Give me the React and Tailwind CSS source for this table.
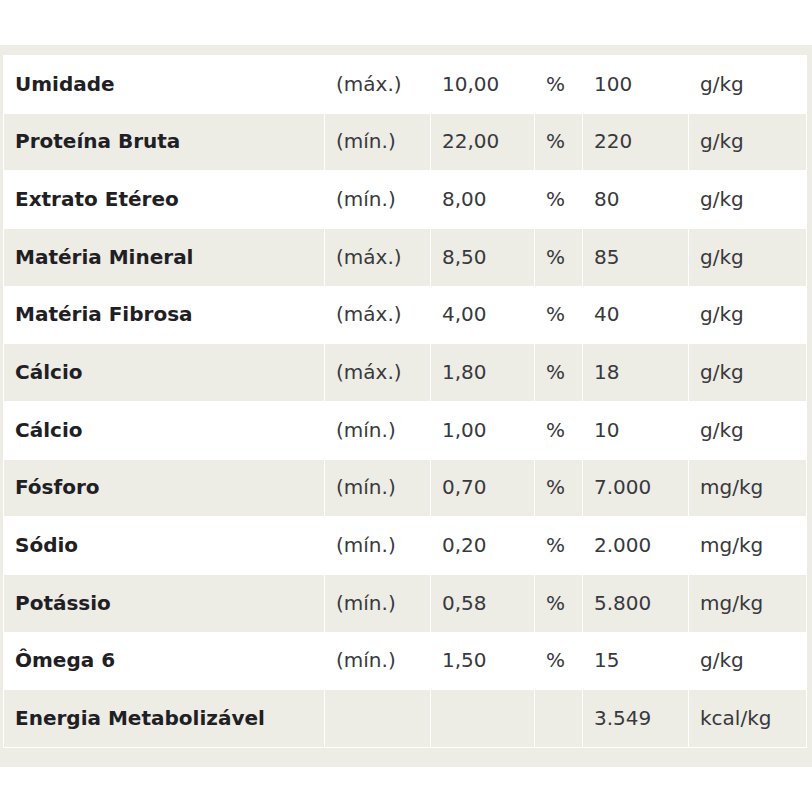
const rows = [
  ["Umidade", "(máx.)", "10,00", "%", "100", "g/kg"],
  ["Proteína Bruta", "(mín.)", "22,00", "%", "220", "g/kg"],
  ["Extrato Etéreo", "(mín.)", "8,00", "%", "80", "g/kg"],
  ["Matéria Mineral", "(máx.)", "8,50", "%", "85", "g/kg"],
  ["Matéria Fibrosa", "(máx.)", "4,00", "%", "40", "g/kg"],
  ["Cálcio", "(máx.)", "1,80", "%", "18", "g/kg"],
  ["Cálcio", "(mín.)", "1,00", "%", "10", "g/kg"],
  ["Fósforo", "(mín.)", "0,70", "%", "7.000", "mg/kg"],
  ["Sódio", "(mín.)", "0,20", "%", "2.000", "mg/kg"],
  ["Potássio", "(mín.)", "0,58", "%", "5.800", "mg/kg"],
  ["Ômega 6", "(mín.)", "1,50", "%", "15", "g/kg"],
  ["Energia Metabolizável", "", "", "", "3.549", "kcal/kg"],
];

export default function App() {
  return (
    <div className="w-[812px] h-[812px] pt-[45px] bg-white font-['DejaVu_Sans',sans-serif]">
      <div className="bg-[#edece5] pt-[10px] pl-[3px] pr-[5px] pb-[19px]">
        <div className="grid grid-cols-[320px_105px_103px_47px_105px_117px] grid-rows-12 h-[693px] gap-px p-px bg-white">
          {rows.map((row, i) =>
            row.map((cell, j) => (
              <div
                key={i + "-" + j}
                className={
                  "flex items-center px-[11px] pb-px text-[20px] " +
                  (i % 2 === 0 ? "bg-white " : "bg-[#edece5] ") +
                  (j === 0 ? "font-bold text-[#1f2024]" : "font-normal text-[#38393d]")
                }
              >
                {cell}
              </div>
            ))
          )}
        </div>
      </div>
    </div>
  );
}
